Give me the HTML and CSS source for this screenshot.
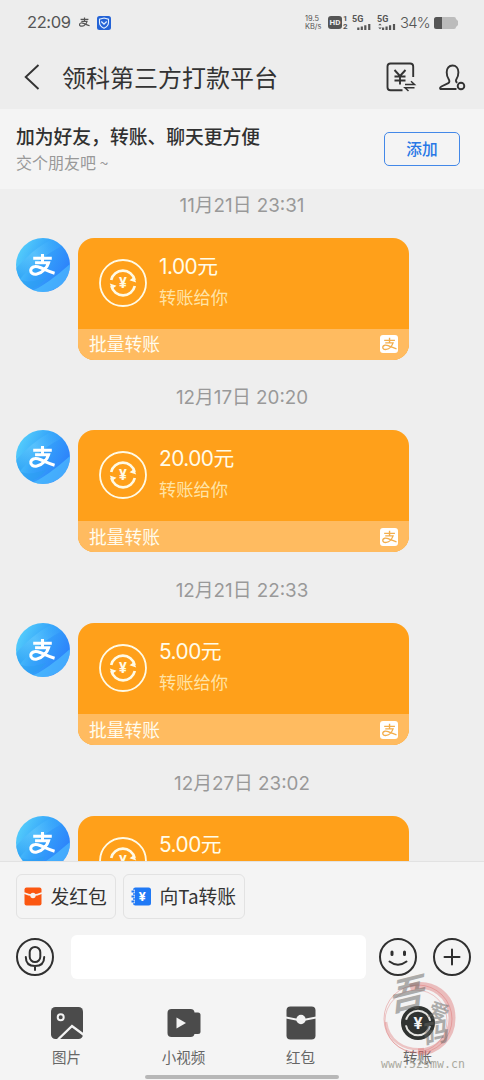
FILE: index.html
```html
<!DOCTYPE html>
<html lang="zh-CN">
<head>
<meta charset="utf-8">
<title>领科第三方打款平台</title>
<link rel="stylesheet" href="styles.css">
</head>
<body>
<svg width="0" height="0" class="defs">
  <defs>
    <linearGradient id="sky" x1="0" y1="0.2" x2="1" y2="0.7">
      <stop offset="0" stop-color="#58d2fb"/><stop offset=".45" stop-color="#36a5fa"/><stop offset="1" stop-color="#2b7dfb"/>
    </linearGradient>
    <linearGradient id="beam" x1="0" y1="1" x2="1" y2="0">
      <stop offset="0" stop-color="#1792f1" stop-opacity=".7"/><stop offset=".5" stop-color="#6cceff" stop-opacity=".5"/><stop offset="1" stop-color="#27a5ff" stop-opacity="0"/>
    </linearGradient>
    <clipPath id="round"><circle cx="27" cy="27" r="27"/></clipPath>
    <symbol id="zhi" viewBox="0 0 30 28">
      <path d="M5 6.2H25M15 1.5V11M7 11H21.500C20 16 15 22.300 9 23.200C4.500 24 1.800 21.500 2.400 18.600C3.200 14.700 8.300 14.500 12.500 16.200C17.500 18.200 22 20.600 28 22.300" fill="none" stroke="currentColor"/>
    </symbol>
    <symbol id="avatar" viewBox="0 0 54 54">
      <g clip-path="url(#round)">
        <rect width="54" height="54" fill="url(#sky)"/>
        <path d="M-2 32C8 22 18 10 42 -2L54 4C32 14 14 28 0 46Z" fill="url(#beam)"/>
        <path d="M12 54C26 50 40 38 54 26V42C44 49 34 54 24 56Z" fill="#53c5ff" opacity=".6"/>
        <path d="M0 38C8 47 20 43 30 40C22 50 12 54 2 50Z" fill="#2a9df0" opacity=".5"/>
      </g>
      <svg x="12" y="14.500" width="29" height="26" viewBox="0 0 30 28" color="#fff" stroke-width="3.300"><use href="#zhi" width="30" height="28"/></svg>
    </symbol>
    <symbol id="transfer" viewBox="0 0 48 48">
      <circle cx="24" cy="24" r="23" fill="none" stroke="currentColor" stroke-width="1.800"/>
      <path d="M12.200 21A12 12 0 0 1 35.600 21M35.800 27A12 12 0 0 1 12.400 27" fill="none" stroke="currentColor" stroke-width="2.700"/>
      <path d="M37.200 23.500L30.500 21.200L35 18ZM10.800 24.500L17.500 26.800L13 30Z" fill="currentColor"/>
      <text x="24" y="29" text-anchor="middle" class="yen" font-size="14.500" fill="currentColor">¥</text>
    </symbol>
    <symbol id="badge" viewBox="0 0 18 18">
      <rect width="18" height="18" rx="3" fill="#fff"/>
      <svg x=".8" y="2" width="17.500" height="15" viewBox="0 0 30 28" color="#f3ae4c" stroke-width="2.600"><use href="#zhi" width="30" height="28"/></svg>
    </symbol>
  </defs>
</svg>

<header class="top">
  <div class="status">
    <span class="clock">22:09</span>
    <svg class="zhi-mini" viewBox="0 0 30 28" stroke-width="3"><use href="#zhi" width="30" height="28"/></svg>
    <svg class="shield" viewBox="0 0 14 14"><rect width="14" height="14" rx="2.500" fill="#2463d6"/><path d="M7 2L11.500 3.200V6.400C11.500 9 9.500 11 7 12.200C4.500 11 2.500 9 2.500 6.400V3.200Z" fill="none" stroke="#e3f0ff" stroke-width="1.100"/><path d="M4.300 5.500L7 8.200L9.700 5.500" fill="none" stroke="#e3f0ff" stroke-width="1.300"/></svg>
    <span class="grow"></span>
    <span class="speed"><b>19.5</b><b>KB/s</b></span>
    <span class="hd">HD</span>
    <span class="sims"><b>1</b><b>2</b></span>
    <span class="signal"><b>5G</b><svg viewBox="0 0 17 8"><path d="M2 5V8M6 4V8M10 2.500V8M14.500 1V8" stroke="#555" stroke-width="2.500"/></svg></span>
    <span class="signal second"><b>5G</b><svg viewBox="0 0 20 8"><path d="M5.500 5V8M9.500 4V8M13.500 2.500V8M18 1V8" stroke="#555" stroke-width="2.500"/><path d="M0 2.500L2 .5L4 2.500ZM0 5L2 7L4 5Z" fill="#555"/></svg></span>
    <span class="percent">34%</span>
    <svg class="battery" viewBox="0 0 24 12"><path d="M2.500 0H20Q22 0 22 2L24 4V8L22 10Q22 12 20 12H2.500Q0 12 0 9.500V2.500Q0 0 2.500 0Z" fill="#bcbcbc"/><path d="M8 0H2.500Q0 0 0 2.500V9.500Q0 12 2.500 12H8Z" fill="#555"/></svg>
  </div>
  <div class="nav">
    <svg class="back" viewBox="0 0 16 26"><path d="M14.500 1L1.700 13L14.500 25" /></svg>
    <h1>领科第三方打款平台</h1>
    <svg class="bill" viewBox="0 0 30 30"><path d="M27.200 15V4.500Q27.200 1.500 24.200 1.500H4.500Q1.500 1.500 1.500 4.500V25.200Q1.500 28.200 4.500 28.200H16.500"/><path d="M8.500 8L14 14L19.500 8M14 14V22.500M8.500 14.500H19.500M8.500 18.500H19.500"/><path d="M19 22.500H28.500L25 19.200M28.500 25.800H19L22.500 29" stroke-width="1.500"/></svg>
    <svg class="person" viewBox="0 0 27 27"><path d="M17.500 25H2.200C.3 25 1 23.200 2.400 22.500L9.300 19.200C10.800 18.300 10.500 16.500 9.700 15.300C8.400 13.400 7.700 11.200 7.700 8.200C7.700 4.200 10 1.500 13.500 1.500S19.400 4.200 19.400 8.200C19.400 11.200 18.700 13.400 17.400 15.300C16.500 16.600 17 18 18.300 18.800"/><circle cx="22" cy="22" r="3.300"/></svg>
  </div>
</header>

<section class="banner">
  <div class="banner-copy">
    <p class="banner-title">加为好友，转账、聊天更方便</p>
    <p class="banner-sub">交个朋友吧 ~</p>
  </div>
  <button class="add">添加</button>
</section>

<main class="chat">
  <time>11月21日 23:31</time>
  <article class="message">
    <svg class="avatar"><use href="#avatar"/></svg>
    <div class="card">
      <div class="card-main"><svg class="transfer"><use href="#transfer"/></svg><div><p class="amount">1.00元</p><p class="note">转账给你</p></div></div>
      <div class="card-foot"><span>批量转账</span><svg class="badge"><use href="#badge"/></svg></div>
    </div>
  </article>
  <time>12月17日 20:20</time>
  <article class="message">
    <svg class="avatar"><use href="#avatar"/></svg>
    <div class="card">
      <div class="card-main"><svg class="transfer"><use href="#transfer"/></svg><div><p class="amount">20.00元</p><p class="note">转账给你</p></div></div>
      <div class="card-foot"><span>批量转账</span><svg class="badge"><use href="#badge"/></svg></div>
    </div>
  </article>
  <time>12月21日 22:33</time>
  <article class="message">
    <svg class="avatar"><use href="#avatar"/></svg>
    <div class="card">
      <div class="card-main"><svg class="transfer"><use href="#transfer"/></svg><div><p class="amount">5.00元</p><p class="note">转账给你</p></div></div>
      <div class="card-foot"><span>批量转账</span><svg class="badge"><use href="#badge"/></svg></div>
    </div>
  </article>
  <time>12月27日 23:02</time>
  <article class="message">
    <svg class="avatar"><use href="#avatar"/></svg>
    <div class="card">
      <div class="card-main"><svg class="transfer"><use href="#transfer"/></svg><div><p class="amount">5.00元</p></div></div>
    </div>
  </article>
</main>

<footer class="panel">
  <div class="chips">
    <button class="chip">
      <svg width="18" height="19" viewBox="0 0 18 19"><rect x=".5" y=".5" width="17" height="18" rx="2" fill="#fb5711"/><path d="M0 6Q9 10.500 18 6" fill="none" stroke="#f7f2ef" stroke-width="1.500"/><circle cx="9" cy="8.500" r="2.700" fill="#f7f2ef"/></svg>
      <span>发红包</span>
    </button>
    <button class="chip">
      <svg width="20" height="19" viewBox="0 0 20 19"><rect x="2" y=".5" width="18" height="18" rx="2.500" fill="#2079f5"/><path d="M0 4.500H4M0 9.500H4M0 14.500H4" stroke="#f3f3f3" stroke-width="3.500"/><path d="M.5 4.500H3.500M.5 9.500H3.500M.5 14.500H3.500" stroke="#2079f5" stroke-width="1.800"/><text x="11.300" y="14" text-anchor="middle" class="yen" font-size="13" fill="#fff">¥</text></svg>
      <span>向Ta转账</span>
    </button>
  </div>
  <div class="compose">
    <svg class="round" viewBox="0 0 38 38"><circle cx="19" cy="19" r="18"/><rect x="13.700" y="9" width="10.600" height="15" rx="5.300"/><path d="M9.800 19C9.800 25 13.500 28 19 28S28.200 25 28.200 19M19 28V32"/></svg>
    <div class="field"></div>
    <svg class="round" viewBox="0 0 38 38"><circle cx="19" cy="19" r="18"/><path d="M13 14V16.500M25.500 14V16.500" stroke-width="3"/><path d="M10.500 23.500Q19 30 27.500 23.500"/></svg>
    <svg class="round plus" viewBox="0 0 38 38"><circle cx="19" cy="19" r="18"/><path d="M19 11.500V26.500M11.500 19H26.500"/></svg>
  </div>
  <div class="tools">
    <div class="tool">
      <svg viewBox="0 0 36 36"><rect x="2" y="2" width="32" height="32" rx="4.500" fill="#4b4b4b"/><circle cx="11.700" cy="12.300" r="3" fill="none" stroke="#f3f3f3" stroke-width="2"/><path d="M9 34.500L23 21L35 30" fill="none" stroke="#f3f3f3" stroke-width="2.400"/></svg>
      <span>图片</span>
    </div>
    <div class="tool">
      <svg viewBox="0 0 36 36"><rect x="1.500" y="4" width="27" height="28" rx="4" fill="#4b4b4b"/><path d="M28 7.500H32Q34.500 7.500 34.500 10V26.500Q34.500 29 32 29H28Z" fill="#4b4b4b"/><path d="M10.500 12.500L20 18L10.500 23.500Z" fill="#f3f3f3"/></svg>
      <span>小视频</span>
    </div>
    <div class="tool">
      <svg viewBox="0 0 36 36"><rect x="3.500" y="1.500" width="29" height="33" rx="4" fill="#4b4b4b"/><path d="M3 12.500L18 15.500L33 12.500" fill="none" stroke="#f3f3f3" stroke-width="1.800"/><circle cx="18" cy="14.500" r="4.700" fill="#f3f3f3"/></svg>
      <span>红包</span>
    </div>
    <div class="tool">
      <svg viewBox="0 0 36 36"><circle cx="18" cy="18" r="17" fill="#303331"/><circle cx="18" cy="18" r="12.300" fill="none" stroke="#e4e4e1" stroke-width="2" stroke-dasharray="33 5.600" stroke-dashoffset="-3"/><text x="18" y="24.200" text-anchor="middle" class="yen" font-size="17" fill="#f3f3f3">¥</text></svg>
      <span>转账</span>
      <svg class="watermark" viewBox="0 0 100 110">
        <g fill="none" stroke="#dc6969">
          <path d="M46 16C68 10 88 24 88 47C88 66 74 81 54 81" stroke-width="7" opacity=".4"/>
          <circle cx="54" cy="48" r="34" stroke-width="1" opacity=".4"/>
          <circle cx="52" cy="50" r="31" stroke-width="1" opacity=".35"/>
          <path d="M22 51C24 69 39 80 60 78" stroke-width="2.500" opacity=".35"/>
        </g>
        <g class="brush">
          <text transform="translate(26 41) rotate(-14) skewX(-20)" font-size="36">吾</text>
          <text transform="translate(63 44) rotate(20)" font-size="20">爱</text>
          <text transform="translate(60 74) rotate(-12) skewX(-10)" font-size="26">码</text>
        </g>
        <text class="site" x="17" y="96.500" textLength="84">www.52smw.cn</text>
      </svg>
    </div>
  </div>
  <div class="home-bar"></div>
</footer>
</body>
</html>
```
FILE: styles.css
```css
* { box-sizing: border-box; }
html, body { margin: 0; height: 1080px; overflow: hidden; }
body {
  width: 484px;
  display: flex;
  flex-direction: column;
  background: #eee;
  color: #333;
  font-family: "Noto Sans CJK SC", sans-serif;
}
p, h1 { margin: 0; font-weight: 400; }
svg { display: block; flex: none; overflow: visible; }
button { margin: 0; font-family: inherit; background: none; }
.defs { position: absolute; }
.yen { font-family: Roboto, sans-serif; font-weight: 700; }

.top { height: 109px; flex: none; background: #ededed; }
.status { height: 45px; padding: 0 27px; display: flex; align-items: center; color: #555; }
.clock { font-family: Inter, sans-serif; font-size: 16.5px; letter-spacing: -.4px; width: 51px; margin-top: -1px; }
.zhi-mini { width: 13px; height: 11px; margin-right: 6px; }
.shield { width: 14px; height: 14px; }
.grow { flex: 1; }
.status b { display: block; }
.speed { width: 23px; font: 7.4px/8px Inter, sans-serif; }
.speed b { font-weight: 400; white-space: nowrap; }
.hd { width: 14px; height: 13px; border-radius: 3px; background: #555; color: #eee; font: 700 8px/13px Roboto, sans-serif; text-align: center; }
.sims { width: 10px; padding-left: 1px; font: 8px/7.5px Roboto, sans-serif; }
.signal { width: 22px; margin-right: 3px; padding-top: 1px; }
.signal b { font: 700 9px/7px Roboto, sans-serif; }
.signal svg { height: 7px; margin-left: 4px; width: 16px; }
.signal.second svg { margin-left: 0; width: 20px; }
.percent { font: 300 14.8px/20px Inter, sans-serif; width: 34px; letter-spacing: -.7px; margin-left: -2px; }
.battery { width: 24px; height: 12px; margin-right: -1px; }

.nav { height: 64px; padding: 0 18px 0 24px; display: flex; align-items: center; }
.nav svg { fill: none; stroke: #333; stroke-width: 1.9; }
.nav .back { width: 16px; height: 26px; margin-right: 22px; }
.nav h1 { flex: 1; font-size: 24px; line-height: 36px; color: #333; }
.bill { width: 30px; height: 30px; margin-right: 23px; }
.person { width: 27px; height: 27px; }

.banner { height: 80px; flex: none; background: #f4f4f4; padding: 0 24px 0 16px; display: flex; align-items: center; justify-content: space-between; }
.banner-copy { padding-bottom: 1px; }
.banner-title { font-size: 18.8px; line-height: 28px; font-weight: 500; color: #303030; }
.banner-sub { font-size: 16px; line-height: 25px; color: #999; }
.add { width: 76px; height: 34px; border: 1.5px solid #4388e8; border-radius: 5px; color: #2878e6; font-size: 15.7px; line-height: 28px; font-weight: 500; padding: 0; }

.chat { height: 672px; flex: none; overflow: hidden; }
.chat time { display: block; height: 71px; padding-top: 25px; text-align: center; font-family: Inter, "Noto Sans CJK SC", sans-serif; font-size: 18.8px; line-height: 28px; color: #999; }
.chat time:first-child { height: 48.6px; padding-top: 3px; }
.message { display: flex; gap: 8px; padding-left: 16px; height: 121.9px; }
.avatar { width: 54px; height: 54px; }
.card { width: 331px; height: 122px; border-radius: 16px; background: #ffa01a; overflow: hidden; }
.card-main { height: 91px; padding: 15px 20px 0 21px; display: flex; gap: 12px; }
.transfer { width: 48px; height: 48px; margin-top: 6px; color: #fffae5; }
.amount { font-family: Inter, "Noto Sans CJK SC", sans-serif; font-size: 20.8px; line-height: 28px; letter-spacing: -.5px; color: #fffce9; }
.note { font-size: 17.3px; line-height: 26px; margin-top: 3px; color: #ffe3a5; }
.card-foot { height: 31px; padding: 0 11px; background: #ffbb60; display: flex; align-items: center; justify-content: space-between; color: #fffbed; font-size: 17.8px; line-height: 28px; }
.card-foot span { margin-top: -2px; }
.badge { width: 18px; height: 18px; }

.panel { height: 219px; background: #f4f4f4; border-top: 1px solid #e2e2e2; display: flex; flex-direction: column; }
.chips { padding: 12px 16px 0; display: flex; gap: 7px; }
.chip { height: 45px; padding: 0 7px; border: 1.5px solid #e2e2e2; border-radius: 6px; display: flex; align-items: center; gap: 8.5px; color: #333; font-size: 18.8px; line-height: 28px; width: 100px; }
.chip + .chip { width: 122px; }
.chip span { margin-top: -2px; white-space: nowrap; }
.compose { padding: 16px 13px 0 16px; height: 60px; display: flex; align-items: center; }
.round { width: 38px; height: 38px; fill: none; stroke: #303030; stroke-width: 2; stroke-linecap: round; }
.field { width: 295px; height: 44px; margin: 0 13px 0 17px; border-radius: 6px; background: #fff; }
.plus { margin-left: 16px; }
.tools { padding: 26px 8px 0; display: grid; grid-template-columns: repeat(4, 117px); }
.tool { display: flex; flex-direction: column; align-items: center; gap: 4px; position: relative; font-size: 14.5px; line-height: 24px; color: #666; }
.tool > svg { width: 36px; height: 36px; }
.tool > .watermark { position: absolute; width: 100px; height: 110px; left: 5px; top: -34px; }
.brush { fill: #656562; opacity: .5; font-family: "Noto Sans CJK SC", sans-serif; font-weight: 700; }
.site { fill: #aaa99e; font: 11.5px "DejaVu Sans Mono", monospace; }
.home-bar { width: 194px; height: 4px; border-radius: 2px; background: #b7b7b7; margin: auto auto 1px; }
```
